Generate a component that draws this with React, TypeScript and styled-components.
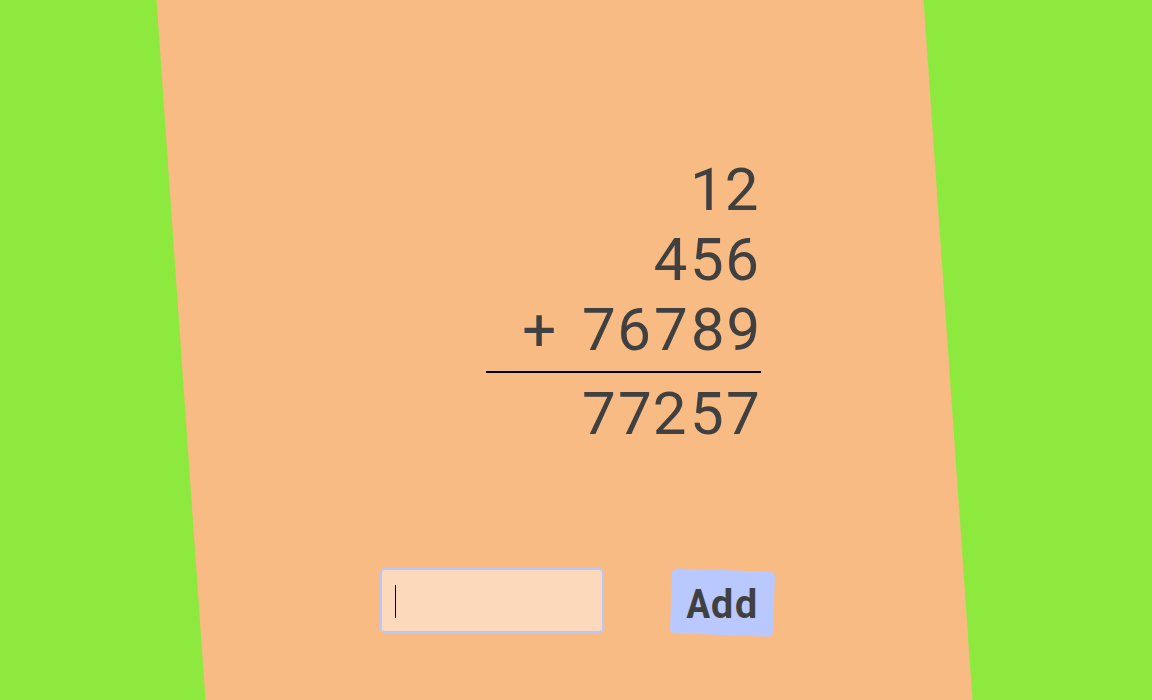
import React, { useState } from "react";
import styled, { createGlobalStyle } from "styled-components";

const GlobalStyle = createGlobalStyle`
  *, *::before { box-sizing: border-box; }
  body {
    margin: 0;
    background: #8ee93e;
    color: #404040;
    font-family: "Roboto Mono", Roboto, sans-serif;
  }
`;

const Page = styled.div`
  position: relative;
  z-index: 0;
  min-height: 100vh;
  overflow: hidden;

  &::before {
    content: "";
    position: absolute;
    z-index: -1;
    top: 0;
    bottom: 0;
    left: 15.75%;
    width: 66.6%;
    background: #f9bb84;
    transform: skewX(4deg);
  }
`;

const Calculator = styled.main`
  max-width: 400px;
  margin: 0 auto;
  padding: 152px 0 64px;
`;

const Sum = styled.section`
  width: 275px;
  margin: 0 15px 122px auto;
  font-size: 60px;
  line-height: 70px;
`;

const Row = styled.div`
  display: flex;
  justify-content: flex-end;
  gap: 24px;
`;

const Total = styled.output`
  display: block;
  margin-top: 9px;
  padding-top: 3px;
  border-top: 2px solid #000;
  text-align: right;
`;

const Form = styled.form`
  display: flex;
  align-items: flex-end;
  gap: 67px;
  padding-left: 4px;
`;

const Field = styled.div`
  position: relative;
  height: 67px;
`;

const NumberInput = styled.input`
  display: block;
  width: 224px;
  height: 65px;
  padding: 0 13px;
  border: 2px solid #b8c8ff;
  border-radius: 5px;
  outline: none;
  background: #fcd9bb;
  color: #404040;
  caret-color: #000;
  font: 25px "Roboto Mono", Roboto, sans-serif;

  &:placeholder-shown {
    caret-color: transparent;
  }
`;

const Caret = styled.span`
  position: absolute;
  top: 17px;
  left: 15px;
  width: 1px;
  height: 33px;
  background: #000;
  pointer-events: none;
`;

const AddButton = styled.button`
  position: relative;
  z-index: 0;
  width: 103px;
  height: 65px;
  padding: 0 1px 0 0;
  border: 0;
  background: none;
  color: #404040;
  font: 700 40px "Roboto Mono", Roboto, sans-serif;
  cursor: pointer;

  &::before {
    content: "";
    position: absolute;
    z-index: -1;
    inset: 0;
    border-radius: 5px;
    background: #b9c9ff;
    transform: rotate(2deg);
  }
`;

export default function App() {
  const [numbers, setNumbers] = useState([12, 456, 76789]);
  const [value, setValue] = useState("");
  const total = numbers.reduce((a, b) => a + b, 0);

  const add = (event: React.FormEvent) => {
    event.preventDefault();
    const next = Number(value);
    if (value.trim() && Number.isFinite(next)) setNumbers([...numbers, next]);
    setValue("");
  };

  return (
    <>
      <GlobalStyle />
      <Page>
        <Calculator>
          <Sum aria-label="Sum">
            {numbers.map((n, i) => (
              <Row key={i}>
                {i === numbers.length - 1 && <span>+</span>}
                <span>{n}</span>
              </Row>
            ))}
            <Total>{total}</Total>
          </Sum>
          <Form onSubmit={add}>
            <Field>
              <NumberInput
                aria-label="Number to add"
                inputMode="numeric"
                placeholder=" "
                autoFocus
                value={value}
                onChange={(e) => setValue(e.target.value)}
              />
              {value === "" && <Caret />}
            </Field>
            <AddButton type="submit">Add</AddButton>
          </Form>
        </Calculator>
      </Page>
    </>
  );
}
